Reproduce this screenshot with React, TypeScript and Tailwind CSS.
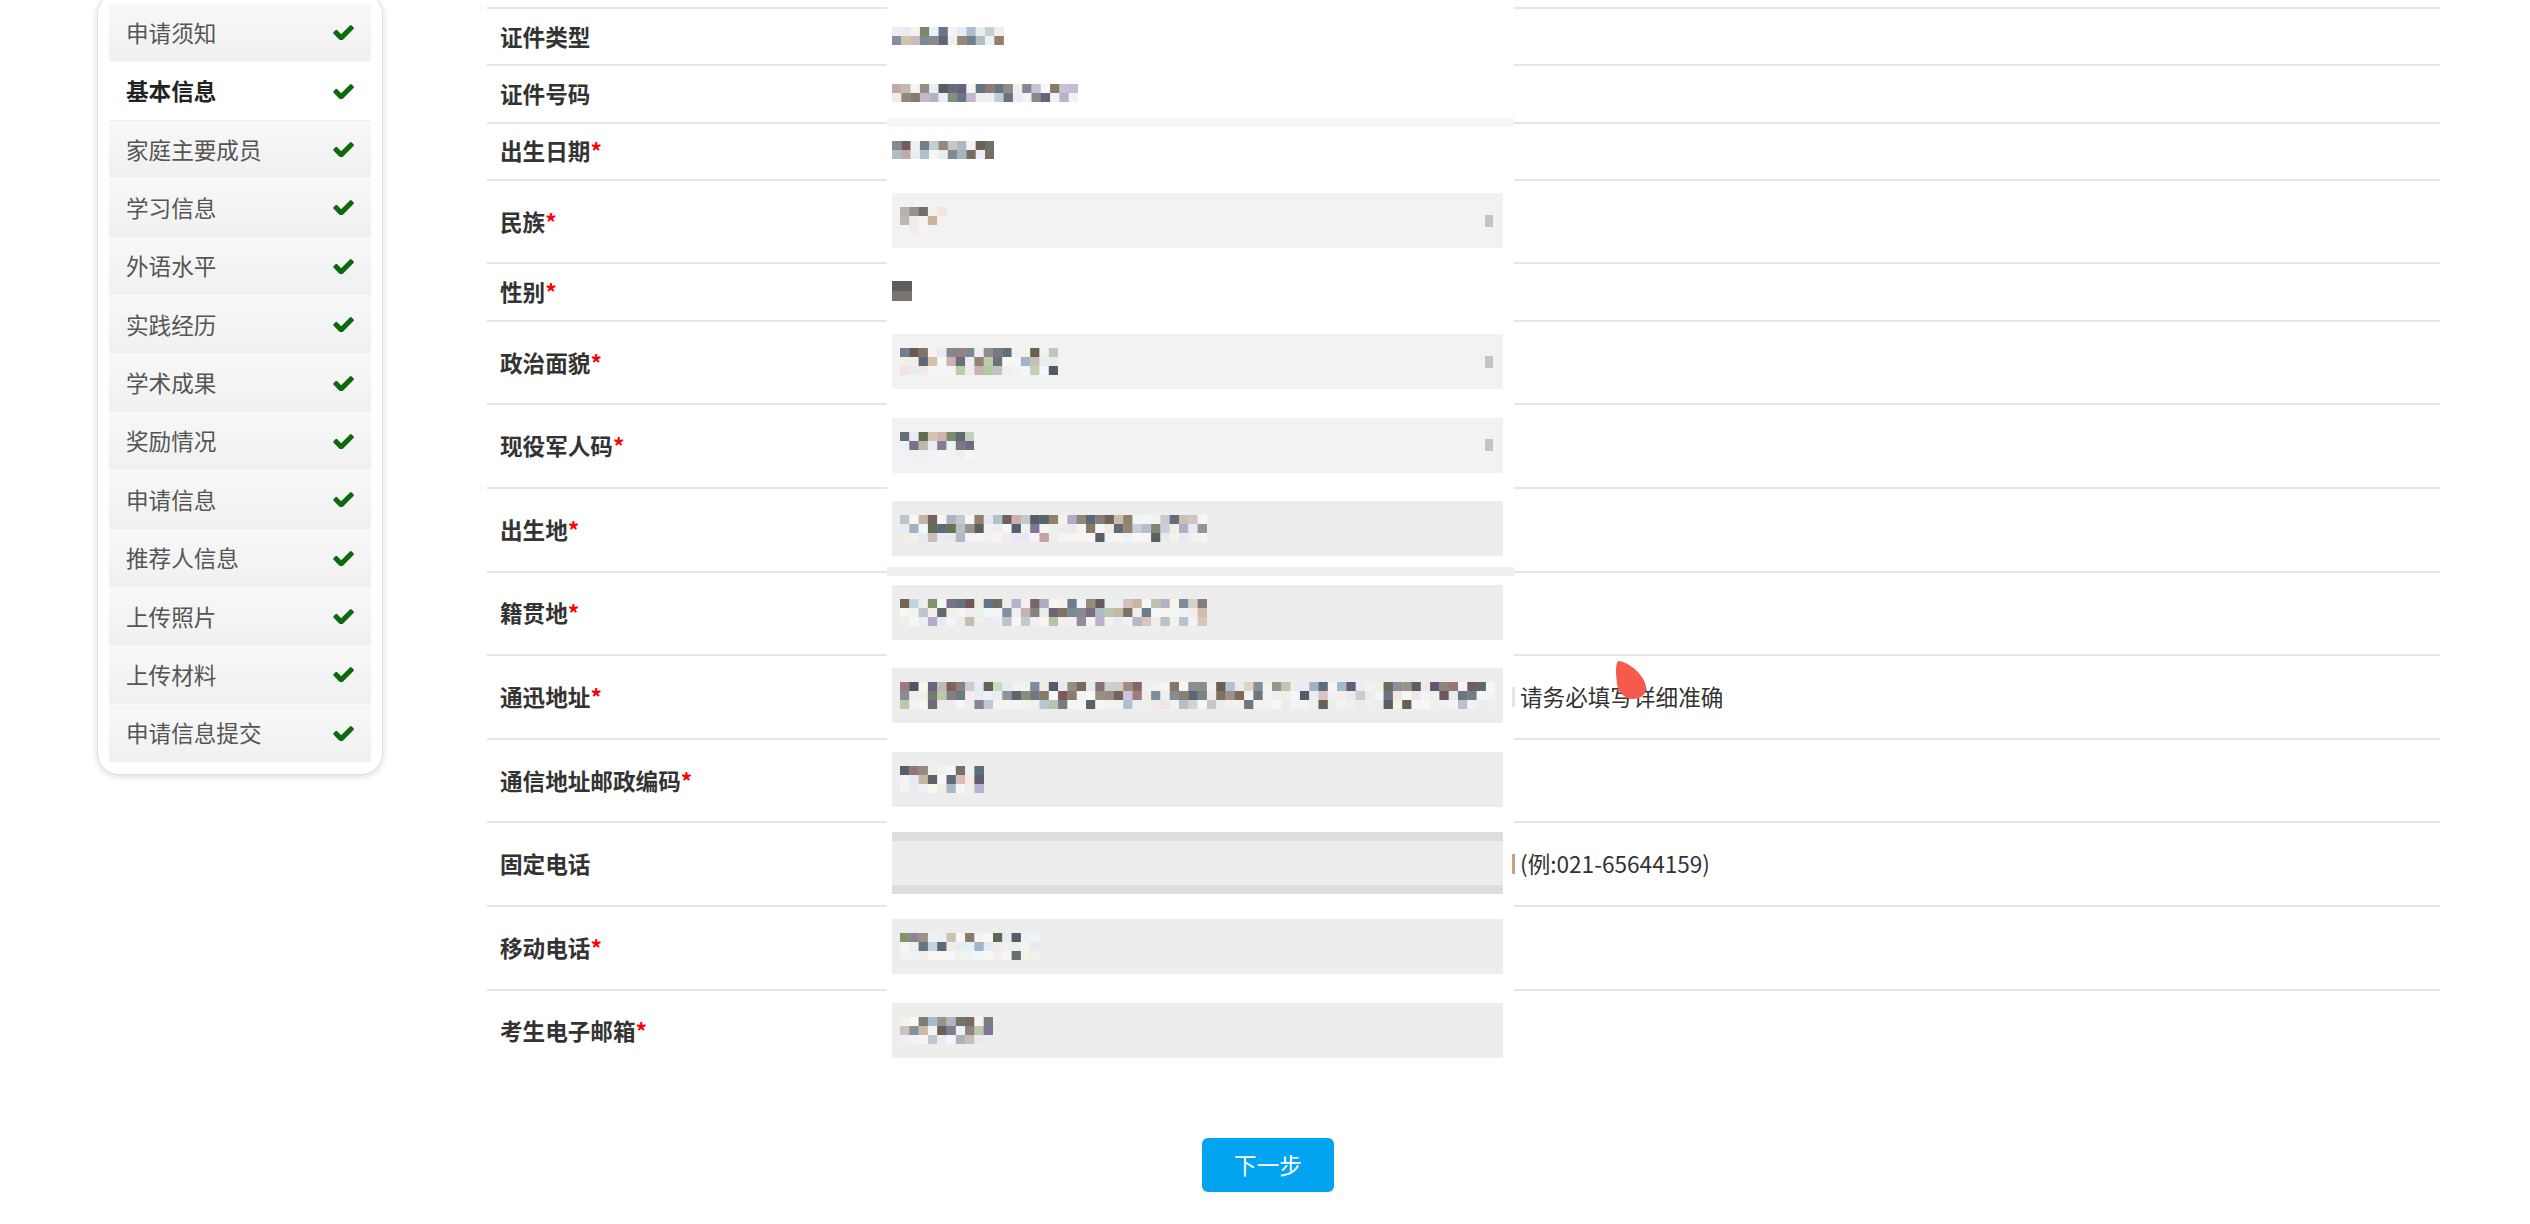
import type { ReactNode } from "react";

const FONT = { fontFamily: '"Noto Sans CJK SC", "Noto Sans", sans-serif' };

const steps = [
  "申请须知",
  "基本信息",
  "家庭主要成员",
  "学习信息",
  "外语水平",
  "实践经历",
  "学术成果",
  "奖励情况",
  "申请信息",
  "推荐人信息",
  "上传照片",
  "上传材料",
  "申请信息提交",
];

type Kind = "plain" | "select" | "input" | "radio" | "empty";

interface Row {
  label: string;
  required?: boolean;
  kind: Kind;
  cols?: number;
  seed?: number;
  hint?: string;
  tall?: boolean;
  band?: string;
  mark?: string;
}

const rows: Row[] = [
  { label: "证件类型", kind: "plain", cols: 12, seed: 11 },
  { label: "证件号码", kind: "plain", cols: 20, seed: 23 },
  { label: "出生日期", required: true, kind: "plain", cols: 11, seed: 37, band: "bg-[#f6f6f6]" },
  { label: "民族", required: true, kind: "select", cols: 5, seed: 41, tall: true },
  { label: "性别", required: true, kind: "radio" },
  { label: "政治面貌", required: true, kind: "select", cols: 17, seed: 53, tall: true },
  { label: "现役军人码", required: true, kind: "select", cols: 8, seed: 67, tall: true },
  { label: "出生地", required: true, kind: "input", cols: 33, seed: 71, tall: true },
  { label: "籍贯地", required: true, kind: "input", cols: 33, seed: 83, tall: true, band: "bg-[#efefef]" },
  { label: "通迅地址", required: true, kind: "input", cols: 64, seed: 97, tall: true, hint: "请务必填写详细准确", mark: "bg-[#e4e4e4]" },
  { label: "通信地址邮政编码", required: true, kind: "input", cols: 9, seed: 101, tall: true },
  { label: "固定电话", kind: "empty", tall: true, hint: "(例:021-65644159)", mark: "bg-[#c9a27c]" },
  { label: "移动电话", required: true, kind: "input", cols: 15, seed: 113, tall: true },
  { label: "考生电子邮箱", required: true, kind: "input", cols: 10, seed: 127, tall: true },
];

function rng(seed: number) {
  let s = seed * 7919 + 13;
  return () => {
    s = (s * 16807) % 2147483647;
    return (s - 1) / 2147483646;
  };
}

const hues = [210, 215, 30, 35, 0, 200, 260, 90];

// pixelated (privacy-blurred) value
function Mosaic({ cols, seed, lines = 3 }: { cols: number; seed: number; lines?: number }) {
  const r = rng(seed);
  const cell = 9.3;
  const dark = [0.4, 0.34, 0.08];
  const rects: ReactNode[] = [];
  for (let y = 0; y < lines; y++) {
    for (let x = 0; x < cols; x++) {
      const v = r();
      const h = hues[Math.floor(r() * hues.length)];
      let fill: string;
      if (v < dark[y]) fill = `hsl(${h} ${4 + r() * 12}% ${36 + r() * 22}%)`;
      else if (v < dark[y] + 0.18) fill = `hsl(${h} ${8 + r() * 22}% ${70 + r() * 12}%)`;
      else fill = `hsl(${h} ${10 + r() * 30}% ${92 + r() * 5}%)`;
      rects.push(<rect key={`${x}-${y}`} x={x * cell} y={y * 9} width={cell + 0.3} height={9.3} fill={fill} />);
    }
  }
  return (
    <svg width={cols * cell} height={lines * 9} className="block shrink-0">
      {rects}
    </svg>
  );
}

function Check() {
  return (
    <svg viewBox="100 360 1580 1070" className="h-[15px] w-[21px]">
      <path
        fill="#0b6a0b"
        d="M1671 566q0 40-28 68l-724 724-136 136q-28 28-68 28t-68-28l-136-136-362-362q-28-28-28-68t28-68l136-136q28-28 68-28t68 28l294 295 656-657q28-28 68-28t68 28l136 136q28 28 28 68z"
      />
    </svg>
  );
}

function Sidebar() {
  return (
    <aside className="-mt-[8px] ml-[97px] w-[286px] shrink-0 rounded-[22px] border border-[#e2e2e2] bg-white p-[11px] shadow-[0_2px_6px_rgba(0,0,0,0.14)]">
      {steps.map((s, i) => {
        const active = i === 1;
        return (
          <div
            key={s}
            className={
              active
                ? "flex h-[58.4px] items-center justify-between border-b border-[#eeeeee] bg-white pl-[17px] pr-[17px] text-[22.6px] font-bold text-[#222]"
                : "flex h-[58.4px] items-center justify-between border-b border-[#fbfbfb] bg-linear-to-b from-[#f8f8f8] to-[#f0f0f0] pl-[17px] pr-[17px] text-[22.6px] text-[#555]"
            }
          >
            <span>{s}</span>
            <Check />
          </div>
        );
      })}
    </aside>
  );
}

function Value({ row }: { row: Row }) {
  if (row.kind === "plain") {
    return <Mosaic cols={row.cols!} seed={row.seed!} lines={2} />;
  }
  if (row.kind === "radio") {
    return (
      <div className="flex flex-col">
        <div className="h-[10px] w-[20px] bg-[#5e5e5e]" />
        <div className="h-[10px] w-[20px] bg-[#7a7470]" />
      </div>
    );
  }
  if (row.kind === "empty") {
    return <div className="h-[62px] w-[611px] border-y-[9px] border-[#dddddd] bg-[#ededed]" />;
  }
  const bg = row.kind === "select" ? "bg-[#f2f2f2]" : "bg-[#ededed]";
  return (
    <div className={`flex h-[55px] w-[611px] items-center justify-between pl-[8px] pr-[10px] ${bg}`}>
      <Mosaic cols={row.cols!} seed={row.seed!} />
      {row.kind === "select" && <div className="h-[12px] w-[8px] bg-[#c4c4c4]" />}
    </div>
  );
}

function FormTable() {
  return (
    <div className="ml-[104px] w-[1953px] pt-[7px]">
      {rows.map((row) => (
        <div key={row.label} className={`flex ${row.tall ? "h-[83.6px]" : "h-[57.3px]"}`}>
          <div className="flex w-[400px] shrink-0 items-center border-t-2 border-[#e5e5e5] pl-[13px] text-[22.6px] font-bold text-[#333]">
            {row.label}
            {row.required && <span className="text-[#ff0000]">*</span>}
          </div>
          <div className="relative flex w-[627px] shrink-0 items-center pl-[5px]">
            {row.band && <div className={`absolute -top-[4px] left-0 h-[9px] w-full ${row.band}`} />}
            <Value row={row} />
          </div>
          <div className="flex flex-1 items-center border-t-2 border-[#e5e5e5] text-[22.6px] text-[#333]">
            {row.mark && <span className={`-ml-[2px] mr-[5px] h-[20px] w-[3px] ${row.mark}`} />}
            {row.hint && <span className={row.mark ? "" : "pl-[6px]"}>{row.hint}</span>}
          </div>
        </div>
      ))}
    </div>
  );
}

export default function App() {
  return (
    <div className="relative h-[1224px] w-[2530px] overflow-hidden bg-white" style={FONT}>
      <div className="flex items-start">
        <Sidebar />
        <FormTable />
      </div>
      <div className="mt-[66px] flex justify-center">
        <button className="ml-[6px] h-[54px] w-[132px] rounded-[6px] bg-[#02a4f2] text-[22.6px] text-white">
          下一步
        </button>
      </div>
      <svg className="absolute left-[1613px] top-[660px]" width="34" height="40" viewBox="0 0 34 40">
        <path d="M5 1 C 15 1, 33 16, 33 28 C 33 35, 27 39, 20 39 C 11 39, 5 32, 4 24 C 3 15, 2 5, 5 1 Z" fill="#f55a4d" />
      </svg>
    </div>
  );
}
